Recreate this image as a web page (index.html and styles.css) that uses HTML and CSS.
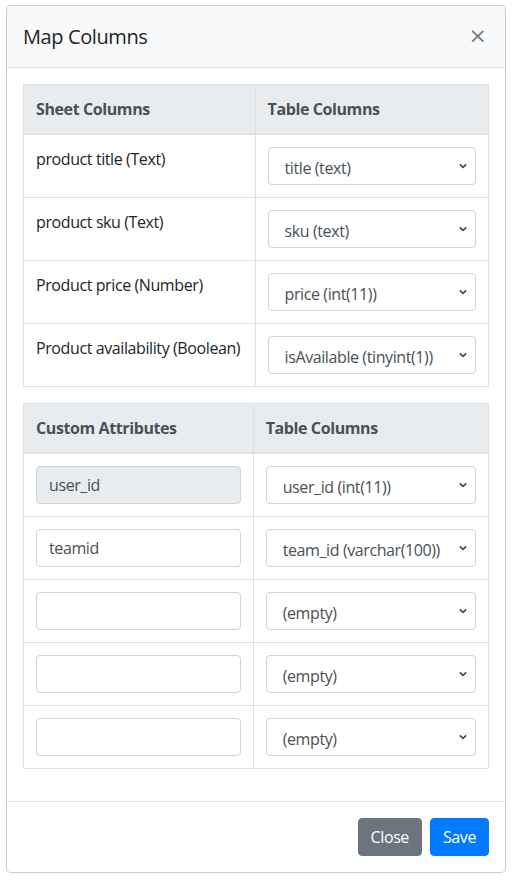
FILE: index.html
```html
<!DOCTYPE html>
<html>
<head>
<meta charset="utf-8">
<link rel="stylesheet" href="styles.css">
</head>
<body>
<div class="modal">
  <div class="modal-header">
    <h5 class="modal-title">Map Columns</h5>
    <button class="close" type="button">&times;</button>
  </div>
  <div class="modal-body">
    <table class="table">
      <thead>
        <tr><th class="c1">Sheet Columns</th><th>Table Columns</th></tr>
      </thead>
      <tbody>
        <tr><td>product title (Text)</td><td><select class="sel"><option>title (text)</option></select></td></tr>
        <tr><td>product sku (Text)</td><td><select class="sel"><option>sku (text)</option></select></td></tr>
        <tr><td>Product price (Number)</td><td><select class="sel"><option>price (int(11))</option></select></td></tr>
        <tr><td>Product availability (Boolean)</td><td><select class="sel"><option>isAvailable (tinyint(1))</option></select></td></tr>
      </tbody>
    </table>
    <table class="table">
      <thead>
        <tr><th class="c2">Custom Attributes</th><th>Table Columns</th></tr>
      </thead>
      <tbody>
        <tr><td><input class="inp" type="text" value="user_id" disabled></td><td><select class="sel"><option>user_id (int(11))</option></select></td></tr>
        <tr><td><input class="inp" type="text" value="teamid"></td><td><select class="sel"><option>team_id (varchar(100))</option></select></td></tr>
        <tr><td><input class="inp" type="text" value=""></td><td><select class="sel"><option>(empty)</option></select></td></tr>
        <tr><td><input class="inp" type="text" value=""></td><td><select class="sel"><option>(empty)</option></select></td></tr>
        <tr><td><input class="inp" type="text" value=""></td><td><select class="sel"><option>(empty)</option></select></td></tr>
      </tbody>
    </table>
  </div>
  <div class="modal-footer">
    <button class="btn btn-secondary" type="button">Close</button>
    <button class="btn btn-primary" type="button">Save</button>
  </div>
</div>
</body>
</html>
```

FILE: styles.css
```css
* { box-sizing: border-box; }
html, body { margin: 0; background: #fff; }
body {
  padding: 5px 6px;
  font-family: "Open Sans", "Noto Sans", Arial, sans-serif;
  font-size: 16px;
  line-height: 1.5;
  color: #212529;
  letter-spacing: -0.4px;
}
.modal {
  width: 500px;
  border: 1px solid rgba(0,0,0,.2);
  border-radius: 4.8px;
  background: #fff;
  overflow: hidden;
}
.modal-header {
  display: flex;
  align-items: center;
  justify-content: space-between;
  height: 62px;
  padding: 0 16px;
  background: #f8f9fa;
  border-bottom: 1px solid #dee2e6;
}
.modal-title {
  margin: 0;
  font-size: 20px;
  font-weight: 500;
  line-height: 30px;
}
.close {
  border: 0;
  background: transparent;
  padding: 0 2px 2px 0;
  margin: 0;
  font-family: "DejaVu Sans", sans-serif;
  font-size: 22px;
  font-weight: 400;
  line-height: 1;
  color: #000;
  opacity: .5;
}
.modal-body { padding: 16px; }
.table {
  width: 100%;
  border-collapse: collapse;
  margin-bottom: 16px;
  table-layout: fixed;
}
.table th, .table td {
  padding: 12px;
  border: 1px solid #dee2e6;
  vertical-align: top;
  text-align: left;
}
.table .c1 { width: 49.8%; }
.table .c2 { width: 49.4%; }
.table th {
  background: #e9ecef;
  color: #495057;
  font-weight: 700;
  border-bottom-width: 2px;
}
.sel, .inp {
  display: block;
  width: 100%;
  height: 38px;
  font-family: inherit;
  font-size: 16px;
  letter-spacing: -0.4px;
  color: #495057;
  background-color: #fff;
  border: 1px solid #ced4da;
  border-radius: 4px;
}
.sel {
  appearance: none;
  -webkit-appearance: none;
  padding: 4px 30px 0 16px;
  background-image: url("data:image/svg+xml;utf8,<svg xmlns='http://www.w3.org/2000/svg' width='10' height='6' viewBox='0 0 10 6'><path d='M1.8 1.4 L5 4.4 L8.2 1.4' fill='none' stroke='%23444' stroke-width='1.5'/></svg>");
  background-repeat: no-repeat;
  background-position: right 7px center;
  background-size: 10px 6px;
}
.inp { padding: 6px 12px; }
.inp:disabled { background-color: #e9ecef; }
.modal-footer {
  display: flex;
  justify-content: flex-end;
  align-items: center;
  gap: 8px;
  padding: 16px;
  border-top: 1px solid #dee2e6;
}
.btn {
  height: 38px;
  padding: 6px 12px;
  border: 1px solid transparent;
  border-radius: 4px;
  font-family: inherit;
  font-size: 16px;
  letter-spacing: -0.4px;
  line-height: 24px;
  color: #fff;
}
.btn-secondary { background: #6c757d; border-color: #6c757d; }
.btn-primary { background: #007bff; border-color: #007bff; }
```
